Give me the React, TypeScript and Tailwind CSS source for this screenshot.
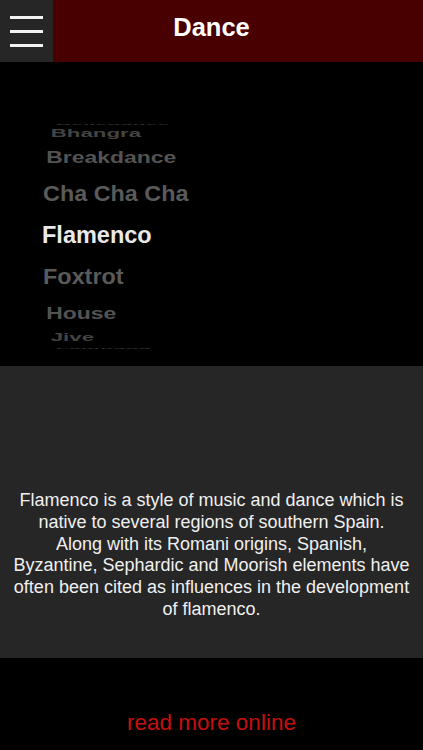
import React from 'react'

const THETA = 22
const RADIUS = 112
const PERSPECTIVE = 1235
const ROW = 42

/** Wheel rows, from the clipped one above the selection to the one below */
const dances = [
  { name: 'Bellydance', color: '#2e2e2e' },
  { name: 'Bhangra', color: '#444444' },
  { name: 'Breakdance', color: '#535353' },
  { name: 'Cha Cha Cha', color: '#5a5a5a' },
  { name: 'Flamenco', color: '#e9e9e9' },
  { name: 'Foxtrot', color: '#5a5a5a' },
  { name: 'House', color: '#535353' },
  { name: 'Jive', color: '#444444' },
  { name: 'Lambada', color: '#2e2e2e' },
]

// place a flat row of the list onto the drum of the wheel
function rowTransform(offset: number) {
  const a = (offset * THETA * Math.PI) / 180
  const cos = Math.cos(a)
  const s = PERSPECTIVE / (PERSPECTIVE + RADIUS * (1 - cos))
  const ty = RADIUS * Math.sin(a) - offset * ROW
  const squash = Math.cos(a * 0.95)
  return `translateY(${ty}px) scale(${s}, ${s * squash})`
}

function MenuButton() {
  return (
    <button className="flex h-full w-[53px] flex-col items-center justify-center gap-[11px] bg-[#262626]">
      <span className="h-[3px] w-[33px] bg-[#f2f2f2]" />
      <span className="h-[3px] w-[33px] bg-[#f2f2f2]" />
      <span className="h-[3px] w-[33px] bg-[#f2f2f2]" />
    </button>
  )
}

export default function App() {
  return (
    <div
      className="flex min-h-[750px] w-full flex-col bg-black"
      style={{ fontFamily: '"Liberation Sans", Arial, sans-serif' }}
    >
      {/* Header */}
      <header className="relative flex h-[62px] bg-[#480000]">
        <MenuButton />
        <h1 className="pointer-events-none absolute inset-x-0 top-[12px] text-center text-[25.5px] font-bold leading-[30px] text-white">
          Dance
        </h1>
      </header>

      {/* Picker wheel */}
      <section className="h-[304px] bg-black pt-[56px]">
        <div className="h-[234px] overflow-hidden">
          <div className="-mt-[71px]">
            {dances.map((dance, i) => (
              <div
                key={dance.name}
                className="flex h-[42px] items-center pl-[42px]"
                style={{ transform: rowTransform(i - 4) }}
              >
                <span
                  className="whitespace-nowrap text-[23.5px] font-bold leading-none"
                  style={{ color: dance.color }}
                >
                  {dance.name}
                </span>
              </div>
            ))}
          </div>
        </div>
      </section>

      {/* Description */}
      <section className="h-[292px] bg-[#262626] px-2 pt-[124px] text-center text-[18px] leading-[21.8px] text-[#f0f0f0]">
        <p>
          Flamenco is a style of music and dance which is
          <br />
          native to several regions of southern Spain.
          <br />
          Along with its Romani origins, Spanish,
          <br />
          Byzantine, Sephardic and Moorish elements have
          <br />
          often been cited as influences in the development
          <br />
          of flamenco.
        </p>
      </section>

      {/* Link */}
      <section className="flex h-[92px] items-start justify-center bg-black pt-[51px]">
        <a className="text-[22.5px] leading-[28px] text-[#c4100e]">read more online</a>
      </section>
    </div>
  )
}
